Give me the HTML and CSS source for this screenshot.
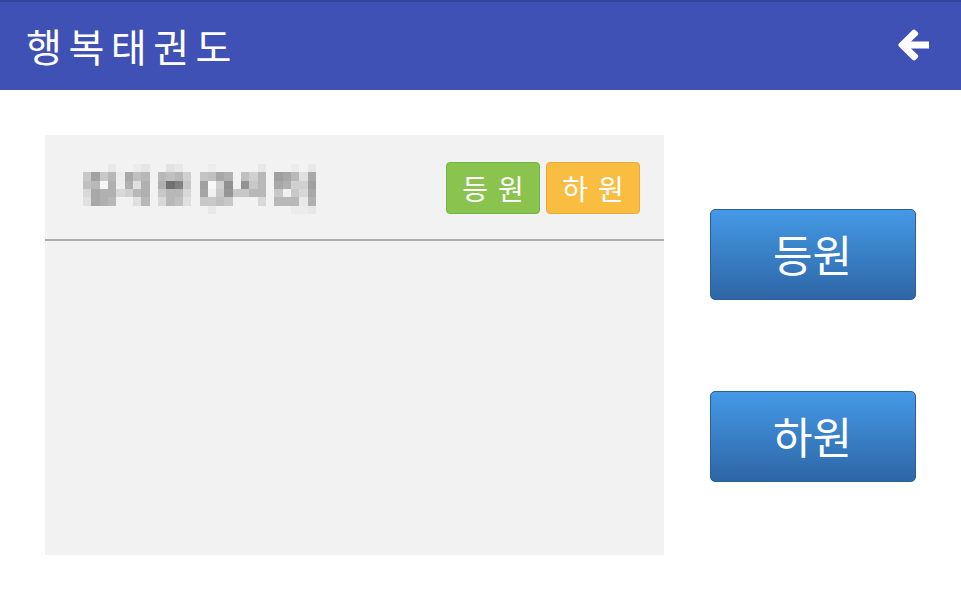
FILE: index.html
```html
<!DOCTYPE html>
<html lang="ko">
<head>
  <meta charset="UTF-8" />
  <meta name="viewport" content="width=device-width, initial-scale=1.0"/>
  <title>행복태권도</title>
  <link rel="stylesheet" href="styles.css">
</head>
<body>
  <header class="app-bar">
    <h1 class="app-title">행복태권도</h1>
    <button class="back-btn" aria-label="뒤로">
      <svg width="32" height="32" viewBox="0 0 32 32">
        <path d="M1 14.6 L14.4 1.2 Q16 -0.3 17.6 1.2 L19.6 3.2 Q21 4.7 19.6 6.2 L13 12.6 L31 12.6 L31 19.4 L13 19.4 L19.6 25.8 Q21 27.3 19.6 28.8 L17.6 30.8 Q16 32.3 14.4 30.8 L1 17.4 Q-0.4 16 1 14.6 Z" fill="#fff"/>
      </svg>
    </button>
  </header>

  <main class="content">
    <section class="student-panel">
      <div class="student-row">
        <!-- name is mosaic-blurred in the original -->
        <svg class="name-mosaic" viewBox="0 0 28 6" preserveAspectRatio="none" shape-rendering="crispEdges">
          <g>
            <rect x="3" y="0" width="1" height="1" fill="#e8e8e8"/>
            <rect x="6" y="0" width="1" height="1" fill="#ececec"/>
            <rect x="7" y="0" width="1" height="1" fill="#e6e6e6"/>
            <rect x="10" y="0" width="1" height="1" fill="#e2e2e2"/>
            <rect x="11" y="0" width="1" height="1" fill="#e8e8e8"/>
            <rect x="15" y="0" width="1" height="1" fill="#ececec"/>
            <rect x="21" y="0" width="1" height="1" fill="#e8e8e8"/>
            <rect x="25" y="0" width="1" height="1" fill="#ececec"/>
            <rect x="27" y="0" width="1" height="1" fill="#e8e8e8"/>
          </g>
          <g>
            <rect x="0" y="1" width="1" height="1" fill="#c8c8c8"/>
            <rect x="1" y="1" width="1" height="1" fill="#a2a2a2"/>
            <rect x="2" y="1" width="1" height="1" fill="#c8c8c8"/>
            <rect x="3" y="1" width="1" height="1" fill="#b8b8b8"/>
            <rect x="4" y="1" width="1" height="1" fill="#ececec"/>
            <rect x="5" y="1" width="1" height="1" fill="#a8a8a8"/>
            <rect x="6" y="1" width="1" height="1" fill="#c0c0c0"/>
            <rect x="7" y="1" width="1" height="1" fill="#b8b8b8"/>
            <rect x="9" y="1" width="1" height="1" fill="#b8b8b8"/>
            <rect x="10" y="1" width="1" height="1" fill="#c0c0c0"/>
            <rect x="11" y="1" width="1" height="1" fill="#b8b8b8"/>
            <rect x="12" y="1" width="1" height="1" fill="#d0d0d0"/>
            <rect x="14" y="1" width="1" height="1" fill="#c4c4c4"/>
            <rect x="15" y="1" width="1" height="1" fill="#c0c0c0"/>
            <rect x="16" y="1" width="1" height="1" fill="#a8a8a8"/>
            <rect x="17" y="1" width="1" height="1" fill="#b0b0b0"/>
            <rect x="19" y="1" width="1" height="1" fill="#c0c0c0"/>
            <rect x="20" y="1" width="1" height="1" fill="#d0d0d0"/>
            <rect x="21" y="1" width="1" height="1" fill="#b8b8b8"/>
            <rect x="23" y="1" width="1" height="1" fill="#a0a0a0"/>
            <rect x="24" y="1" width="1" height="1" fill="#a8a8a8"/>
            <rect x="25" y="1" width="1" height="1" fill="#b8b8b8"/>
            <rect x="26" y="1" width="1" height="1" fill="#e0e0e0"/>
            <rect x="27" y="1" width="1" height="1" fill="#a8a8a8"/>
          </g>
          <g>
            <rect x="0" y="2" width="1" height="1" fill="#c0c0c0"/>
            <rect x="1" y="2" width="1" height="1" fill="#b8b8b8"/>
            <rect x="2" y="2" width="1" height="1" fill="#f6f6f6"/>
            <rect x="3" y="2" width="1" height="1" fill="#b0b0b0"/>
            <rect x="4" y="2" width="1" height="1" fill="#eeeeee"/>
            <rect x="5" y="2" width="1" height="1" fill="#b0b0b0"/>
            <rect x="6" y="2" width="1" height="1" fill="#e0e0e0"/>
            <rect x="7" y="2" width="1" height="1" fill="#b0b0b0"/>
            <rect x="9" y="2" width="1" height="1" fill="#b0b0b0"/>
            <rect x="10" y="2" width="1" height="1" fill="#717171"/>
            <rect x="11" y="2" width="1" height="1" fill="#808080"/>
            <rect x="12" y="2" width="1" height="1" fill="#c8c8c8"/>
            <rect x="14" y="2" width="1" height="1" fill="#a0a0a0"/>
            <rect x="15" y="2" width="1" height="1" fill="#f8f8f8"/>
            <rect x="16" y="2" width="1" height="1" fill="#d0d0d0"/>
            <rect x="17" y="2" width="1" height="1" fill="#909090"/>
            <rect x="19" y="2" width="1" height="1" fill="#949494"/>
            <rect x="20" y="2" width="1" height="1" fill="#c8c8c8"/>
            <rect x="21" y="2" width="1" height="1" fill="#b8b8b8"/>
            <rect x="23" y="2" width="1" height="1" fill="#a8a8a8"/>
            <rect x="24" y="2" width="1" height="1" fill="#b0b0b0"/>
            <rect x="25" y="2" width="1" height="1" fill="#d0d0d0"/>
            <rect x="26" y="2" width="1" height="1" fill="#d0d0d0"/>
            <rect x="27" y="2" width="1" height="1" fill="#a0a0a0"/>
          </g>
          <g>
            <rect x="0" y="3" width="1" height="1" fill="#d8d8d8"/>
            <rect x="1" y="3" width="1" height="1" fill="#a8a8a8"/>
            <rect x="2" y="3" width="1" height="1" fill="#b0b0b0"/>
            <rect x="3" y="3" width="1" height="1" fill="#b0b0b0"/>
            <rect x="4" y="3" width="1" height="1" fill="#d8d8d8"/>
            <rect x="5" y="3" width="1" height="1" fill="#d0d0d0"/>
            <rect x="6" y="3" width="1" height="1" fill="#b8b8b8"/>
            <rect x="7" y="3" width="1" height="1" fill="#b0b0b0"/>
            <rect x="9" y="3" width="1" height="1" fill="#c8c8c8"/>
            <rect x="10" y="3" width="1" height="1" fill="#b8b8b8"/>
            <rect x="11" y="3" width="1" height="1" fill="#b8b8b8"/>
            <rect x="12" y="3" width="1" height="1" fill="#d8d8d8"/>
            <rect x="14" y="3" width="1" height="1" fill="#a4a4a4"/>
            <rect x="15" y="3" width="1" height="1" fill="#f0f0f0"/>
            <rect x="16" y="3" width="1" height="1" fill="#c8c8c8"/>
            <rect x="17" y="3" width="1" height="1" fill="#969696"/>
            <rect x="18" y="3" width="1" height="1" fill="#c8c8c8"/>
            <rect x="19" y="3" width="1" height="1" fill="#c8c8c8"/>
            <rect x="20" y="3" width="1" height="1" fill="#b8b8b8"/>
            <rect x="21" y="3" width="1" height="1" fill="#b8b8b8"/>
            <rect x="23" y="3" width="1" height="1" fill="#c8c8c8"/>
            <rect x="24" y="3" width="1" height="1" fill="#f0f0f0"/>
            <rect x="25" y="3" width="1" height="1" fill="#c8c8c8"/>
            <rect x="26" y="3" width="1" height="1" fill="#d8d8d8"/>
            <rect x="27" y="3" width="1" height="1" fill="#a8a8a8"/>
          </g>
          <g>
            <rect x="0" y="4" width="1" height="1" fill="#e0e0e0"/>
            <rect x="1" y="4" width="1" height="1" fill="#a8a8a8"/>
            <rect x="2" y="4" width="1" height="1" fill="#b0b0b0"/>
            <rect x="3" y="4" width="1" height="1" fill="#b8b8b8"/>
            <rect x="6" y="4" width="1" height="1" fill="#e0e0e0"/>
            <rect x="7" y="4" width="1" height="1" fill="#b8b8b8"/>
            <rect x="9" y="4" width="1" height="1" fill="#d8d8d8"/>
            <rect x="10" y="4" width="1" height="1" fill="#b8b8b8"/>
            <rect x="11" y="4" width="1" height="1" fill="#c0c0c0"/>
            <rect x="12" y="4" width="1" height="1" fill="#e0e0e0"/>
            <rect x="14" y="4" width="1" height="1" fill="#c8c8c8"/>
            <rect x="15" y="4" width="1" height="1" fill="#c8c8c8"/>
            <rect x="16" y="4" width="1" height="1" fill="#c0c0c0"/>
            <rect x="17" y="4" width="1" height="1" fill="#c8c8c8"/>
            <rect x="21" y="4" width="1" height="1" fill="#d8d8d8"/>
            <rect x="23" y="4" width="1" height="1" fill="#b8b8b8"/>
            <rect x="24" y="4" width="1" height="1" fill="#b8b8b8"/>
            <rect x="25" y="4" width="1" height="1" fill="#b8b8b8"/>
            <rect x="26" y="4" width="1" height="1" fill="#e8e8e8"/>
            <rect x="27" y="4" width="1" height="1" fill="#b0b0b0"/>
          </g>
          <g>
            <rect x="15" y="5" width="1" height="1" fill="#e8e8e8"/>
            <rect x="25" y="5" width="1" height="1" fill="#ececec"/>
            <rect x="26" y="5" width="1" height="1" fill="#ececec"/>
            <rect x="27" y="5" width="1" height="1" fill="#e8e8e8"/>
          </g>
        </svg>
        <div class="status-tags">
          <span class="tag tag-in">등 원</span>
          <span class="tag tag-out">하 원</span>
        </div>
      </div>
    </section>

    <div class="actions">
      <button class="action-btn">등원</button>
      <button class="action-btn">하원</button>
    </div>
  </main>
</body>
</html>
```

FILE: styles.css
```css
body {
  margin: 0;
  background: #fff;
  font-family: "Noto Sans CJK KR", "Noto Sans", sans-serif;
}
.app-bar {
  height: 88px;
  background: #3f51b5;
  border-top: 2px solid #34449f;
  display: flex;
  align-items: center;
  justify-content: space-between;
  padding: 0 31px 0 26px;
}
.app-title {
  margin: 0;
  color: #fff;
  font-size: 39px;
  font-weight: 400;
  letter-spacing: 6.5px;
  line-height: 1;
  padding-bottom: 2px;
}
.back-btn {
  background: none;
  border: 0;
  padding: 0;
  width: 32px;
  height: 32px;
  margin-top: -2px;
}
.back-btn svg {
  display: block;
}
.content {
  display: flex;
  padding: 45px 0 0 45px;
}
.student-panel {
  width: 619px;
  height: 420px;
  background: #f2f2f2;
}
.student-row {
  height: 104px;
  border-bottom: 2px solid #acacac;
  display: flex;
  align-items: center;
  justify-content: space-between;
  padding: 0 24px 0 38px;
}
.name-mosaic {
  width: 233px;
  height: 50px;
  margin-top: 3px;
  filter: blur(0.4px);
}
.status-tags {
  display: flex;
  gap: 6px;
  margin-top: 1px;
}
.tag {
  width: 92px;
  height: 50px;
  border-radius: 4px;
  color: #fff;
  font-size: 28px;
  letter-spacing: 1px;
  display: flex;
  align-items: center;
  justify-content: center;
  text-indent: 1px;
}
.tag-in {
  background: #8bc34f;
  border: 1px solid #70b545;
}
.tag-out {
  background: #f9bd41;
  border: 1px solid #f0a935;
}
.actions {
  flex: 1;
  height: 420px;
  display: flex;
  flex-direction: column;
  align-items: center;
  justify-content: center;
  gap: 91px;
}
.action-btn {
  width: 206px;
  height: 91px;
  border: 1px solid #2b5f98;
  border-radius: 5px;
  background: linear-gradient(to bottom, #4499e6, #2e66a6);
  color: #fff;
  font-family: "Noto Sans CJK KR", "Noto Sans", sans-serif;
  font-size: 43px;
  padding: 0 0 2px;
}
```
